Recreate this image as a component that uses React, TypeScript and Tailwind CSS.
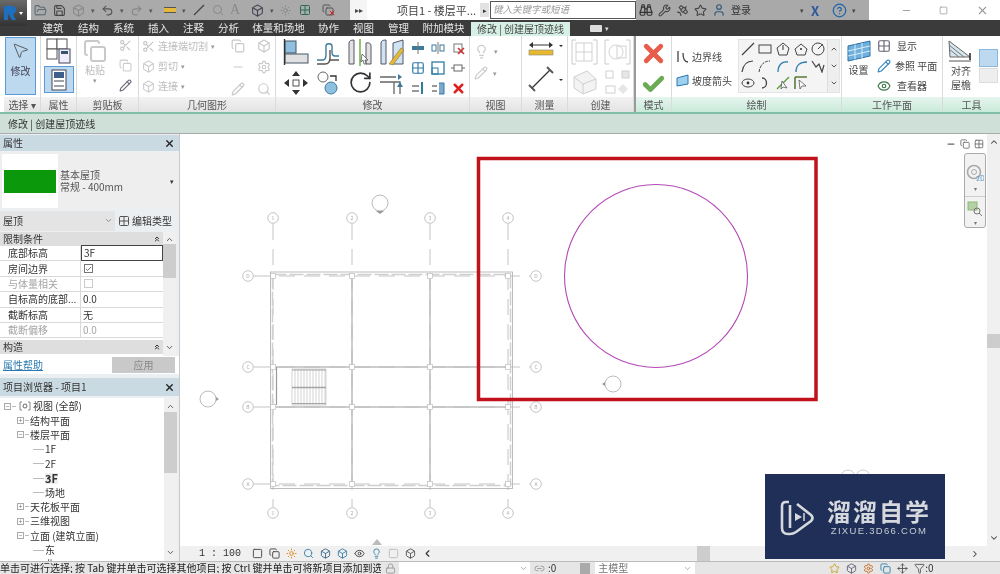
import React from "react";
import { Minus, Square, X, ChevronDown, ChevronUp, ChevronsUp, ChevronLeft, ChevronRight, Check, Scissors, Copy, Lightbulb, Pencil, Search, Wrench, Star, User, CircleHelp, Binoculars, Satellite, Save, FolderOpen, Undo2, Redo2, Lock, Filter, Settings, Grid2x2, Eye, MousePointer2, Move, RotateCw, Box, Sun, Link2 } from "lucide-react";

const font = "font-['Noto_Sans_CJK_SC','Noto_Sans',sans-serif]";

function Ico({ w = 20, h = 20, children }: { w?: number; h?: number; children: React.ReactNode }) {
  return (
    <svg width={w} height={h} viewBox={`0 0 ${w} ${h}`} fill="none" className="shrink-0">
      {children}
    </svg>
  );
}

function Panel({ w, title, green, children }: { w: number; title: string; green?: boolean; children?: React.ReactNode }) {
  return (
    <div className="flex flex-col shrink-0 border-r border-[#d8dcdc]" style={{ width: w }}>
      <div className="h-[61px] overflow-hidden">{children}</div>
      <div className={`h-[15px] flex items-center justify-center text-[10px] leading-none text-[#555] ${green ? "bg-gradient-to-b from-[#e6f5ef] to-[#c9ead9]" : "bg-gradient-to-b from-[#f2f2f2] to-[#e3e3e3]"}`}>
        {title}
      </div>
    </div>
  );
}

function Tab({ w, t }: { w: number; t: string }) {
  return (
    <div className="text-center text-[#e8e8e8] text-[10.5px] leading-none shrink-0" style={{ width: w }}>
      {t}
    </div>
  );
}

function Row({ label, value, dim, active }: { label: string; value: React.ReactNode; dim?: boolean; active?: boolean }) {
  return (
    <div className={`flex h-[15.4px] border-b border-[#d9d9d9] text-[10px] leading-none ${dim ? "text-[#a5a5a5]" : "text-[#333]"}`}>
      <div className="w-[81px] pl-2 flex items-center border-r border-[#d9d9d9] overflow-hidden whitespace-nowrap">{label}</div>
      <div className={`flex-1 pl-[2px] flex items-center ${active ? "border border-[#444] -my-px" : ""}`}>{value}</div>
    </div>
  );
}

function SectionHead({ t }: { t: string }) {
  return (
    <div className="h-[14px] bg-[#dedede] flex items-center justify-between pl-[3px] pr-[2px] text-[10px] leading-none text-[#333]">
      {t}
      <ChevronsUp size={8} strokeWidth={3} />
    </div>
  );
}

function Tree({ t, indent, sign, bold, line, view }: { t: string; indent: number; sign?: string; bold?: boolean; line?: boolean; view?: boolean }) {
  return (
    <div className="h-[14.4px] flex items-center text-[10px] leading-none text-[#333]" style={{ paddingLeft: indent }}>
      {sign && (
        <span className="w-[7px] h-[7px] border border-[#aaa] text-[7px] leading-[5px] text-center text-[#777] mr-[1px]">{sign}</span>
      )}
      {line && <span className="w-[11px] h-px bg-[#bbb] mr-[1px]" />}
      {sign && <span className="w-[4px] h-px bg-[#bbb] mr-[1px]" />}
      {view && (
        <svg width="12" height="10" viewBox="0 0 12 10" fill="none" className="mx-[2px] shrink-0">
          <path d="M3 1H1v8h2M9 1h2v8H9" stroke="#888" />
          <circle cx="6" cy="5" r="2" stroke="#666" />
        </svg>
      )}
      <span className={bold ? "font-bold bg-[#eeeeee] text-[11px]" : ""}>{t}</span>
    </div>
  );
}

function SmallText({ t, dim }: { t: string; dim?: boolean }) {
  return <span className={`text-[10px] leading-none whitespace-nowrap ${dim ? "text-[#bcbcbc]" : "text-[#444]"}`}>{t}</span>;
}

function Bubble({ x, y, n }: { x: number; y: number; n: string }) {
  return (
    <g>
      <circle cx={x} cy={y} r={5.3} fill="#fff" stroke="#b5b5b5" strokeWidth="0.8" />
      <text x={x} y={y + 1.8} textAnchor="middle" fontSize="5" fill="#aaa">{n}</text>
    </g>
  );
}

function Drawing() {
  const vx = [273, 352, 430, 508];
  const hy = [276, 367, 407, 484];
  return (
    <svg viewBox="180 134 807 412" className="w-full h-full block" fill="none">
      {vx.map((x, i) => (
        <g key={x}>
          <line x1={x} y1={224} x2={x} y2={507} stroke="#b5b5b5" strokeWidth="0.8" strokeDasharray="16 9" />
          <Bubble x={x} y={218} n={String(i + 1)} />
          <Bubble x={x} y={513} n={String(i + 1)} />
        </g>
      ))}
      {hy.map((y, i) => (
        <g key={y}>
          <line x1={254} y1={y} x2={530} y2={y} stroke="#b5b5b5" strokeWidth="0.8" strokeDasharray="16 9" />
          <Bubble x={248} y={y} n={"DCBA"[i]} />
          <Bubble x={536} y={y} n={"DCBA"[i]} />
        </g>
      ))}
      <rect x={270.5} y={272} width={242} height={216.5} stroke="#b5b5b5" strokeWidth="0.9" />
      <rect x={272.5} y={274.5} width={238} height={211} stroke="#d0d0d0" strokeWidth="1.5" strokeDasharray="14 3" />
      {[352, 430].map((x) => (
        <line key={x} x1={x} y1={276} x2={x} y2={486} stroke="#bdbdbd" strokeWidth="1.5" />
      ))}
      {[367, 407].map((y) => (
        <line key={y} x1={276} y1={y} x2={510} y2={y} stroke="#bdbdbd" strokeWidth="1.5" />
      ))}
      <line x1={276.5} y1={367} x2={276.5} y2={405} stroke="#999" strokeWidth="1.2" />
      <g stroke="#b5b5b5" strokeWidth="0.6">
        <rect x={292} y={369} width={34} height={36} fill="#fff" />
        {Array.from({ length: 11 }).map((_, i) => (
          <line key={i} x1={295 + i * 3} y1={369} x2={295 + i * 3} y2={405} />
        ))}
      </g>
      <line x1={292} y1={387.5} x2={326} y2={387.5} stroke="#a5a5a5" strokeWidth="1.6" />
      <line x1={292} y1={370} x2={326} y2={370} stroke="#a5a5a5" strokeWidth="1" />
      <line x1={292} y1={403.5} x2={326} y2={403.5} stroke="#a5a5a5" strokeWidth="1" />
      {vx.flatMap((x) =>
        hy.map((y) => <rect key={`${x}-${y}`} x={x - 2.5} y={y - 2.5} width={5} height={5} fill="#fff" stroke="#b5b5b5" strokeWidth="0.6" />)
      )}
      <circle cx={380} cy={203} r={8} fill="#fff" stroke="#aaa" strokeWidth="0.8" />
      <path d="M376 211 L384 211 L380 214Z" fill="#999" />
      <circle cx={208} cy={399} r={8} fill="#fff" stroke="#aaa" strokeWidth="0.8" />
      <path d="M216 397 L216 401 L219 399Z" fill="#999" />
      <circle cx={613} cy={384} r={8} fill="#fff" stroke="#aaa" strokeWidth="0.8" />
      <path d="M605 382 L605 386 L602 384Z" fill="#999" />
      <path d="M372 545 L382 545 L377 539Z" fill="#bbb" />
      <circle cx={848} cy={477} r={7} stroke="#ccc" strokeWidth="1" />
      <circle cx={863} cy={477} r={7} stroke="#ccc" strokeWidth="1" />
      <rect x={478.5} y={158.5} width={337.5} height={241} stroke="#c1121c" strokeWidth="3.5" />
      <circle cx={656} cy={276} r={91.5} stroke="#b24bb4" strokeWidth="1.1" />
    </svg>
  );
}

function TitleBar() {
  const q = "#5a6a72";
  return (
    <div className="flex h-[20px] bg-white">
      <div className="w-[27px] h-[26px] bg-gradient-to-b from-[#6a6a6a] to-[#333] z-10 flex items-center pl-[3px] gap-[2px]">
        <svg width="14" height="16" viewBox="0 0 14 16">
          <path d="M1 15V1h7a4 4 0 0 1 2 8l3 6H9L6 9.5H5V15Z" fill="#1f6fc0" />
        </svg>
        <span className="w-0 h-0 border-x-[2px] border-x-transparent border-t-[3px] border-t-white" />
      </div>
      <div className="w-[4px]" />
      <div className="w-[319px] bg-[#aaaaaa] flex items-center pl-[3px] gap-[6px]">
        <FolderOpen size={13} color={q} />
        <Save size={13} color="#444" />
        <Box size={13} color="#888" />
        <span className="text-[7px] text-[#555]">▾</span>
        <Undo2 size={13} color="#555" />
        <span className="text-[7px] text-[#555]">▾</span>
        <Redo2 size={13} color="#888" />
        <span className="text-[7px] text-[#555]">▾</span>
        <span className="w-[12px] h-[6px] ml-[5px] bg-[#e6b93a] border-y border-[#555]" />
        <span className="text-[7px] text-[#555]">▾</span>
        <Ico w={14} h={14}><path d="M2 12 12 2" stroke="#444" strokeWidth="1.3" /></Ico>
        <Search size={12} color="#888" />
        <span className="text-[14px] leading-none text-[#888] font-['Liberation_Serif',serif]">A</span>
        <Box size={13} color="#445" className="ml-[5px]" />
        <span className="text-[7px] text-[#555]">▾</span>
        <Sun size={11} color="#888" />
        <Grid2x2 size={12} color="#2c6a5a" className="ml-[2px]" />
        <span className="relative ml-[5px]">
          <Copy size={12} color="#555" />
          <X size={8} color="#c22" strokeWidth={3} className="absolute -right-[2px] -bottom-[1px]" />
        </span>
      </div>
      <div className="w-[17px] flex items-center justify-center text-[8px] text-[#444] bg-[#f5f5f5]">▸▸</div>
      <div className="w-[113px] flex items-center justify-end pr-[4px] text-[11px] leading-none text-[#444] whitespace-nowrap">项目1 - 楼层平...</div>
      <div className="w-[9px] my-[3px] bg-[#e2e2e2] flex items-center justify-center text-[7px] text-[#333]">▸</div>
      <div className="w-[146px] ml-px my-px border border-[#555] bg-white flex items-center pl-[2px] text-[9.5px] italic leading-none text-[#999] whitespace-nowrap">键入关键字或短语</div>
      <div className="w-[233px] bg-[#a9a9a9] flex items-center pl-[3px] gap-[5px]">
        <Binoculars size={14} color="#333" />
        <Wrench size={13} color="#444" />
        <Satellite size={13} color="#444" />
        <Star size={13} color="#444" />
        <User size={14} color="#33577a" />
        <span className="text-[10px] leading-none text-[#333] w-[64px]">登录</span>
        <span className="text-[7px] text-[#444]">▾</span>
        <span className="text-[13px] leading-none font-bold text-[#2a5a9c] ml-[2px]">X</span>
        <CircleHelp size={15} color="#2264a8" className="ml-[8px]" />
        <span className="text-[7px] text-[#444]">▾</span>
      </div>
      <div className="flex-1 flex items-center text-[#9a9a9a]">
        <Minus size={11} className="ml-[32px]" />
        <Square size={9} className="ml-[27px]" />
        <X size={13} className="ml-[28px]" />
      </div>
    </div>
  );
}

function Ribbon() {
  return (
    <div className="flex h-[78px] shrink-0 bg-white border-b-2 border-[#7fbfa5]">
      <div className="w-[4px]" />
      <Panel w={37} title="选择 ▾">
        <div className="w-[31px] h-[58px] mt-px ml-px bg-[#bcd9f0] border border-[#5b9bd5] flex flex-col items-center pt-[3px] gap-[6px]">
          <MousePointer2 size={19} color="#555" strokeWidth={1.2} />
          <span className="text-[10px] leading-none text-[#445]">修改</span>
        </div>
      </Panel>
      <Panel w={36} title="属性">
        <div className="flex flex-col items-center">
          <Ico w={26} h={30}>
            <rect x="1" y="3" width="10" height="10" stroke="#555" fill="#fff" />
            <rect x="11" y="3" width="10" height="10" stroke="#555" fill="#fff" />
            <rect x="1" y="13" width="10" height="10" stroke="#555" fill="#fff" />
            <rect x="13" y="13" width="11" height="14" stroke="#445" fill="#eef" />
            <rect x="15" y="15" width="7" height="3" fill="#356" />
          </Ico>
          <div className="w-[30px] h-[27px] bg-[#bcd9f0] border border-[#5b9bd5] flex items-center justify-center">
            <Ico w={16} h={22}>
              <rect x="1" y="1" width="14" height="20" fill="#fff" stroke="#445" />
              <rect x="3" y="3" width="10" height="6" fill="#3c5f8c" />
              <path d="M3 12h10M3 17h10" stroke="#445" />
            </Ico>
          </div>
        </div>
      </Panel>
      <Panel w={62} title="剪贴板">
        <div className="grid grid-cols-[36px_1fr] h-full pt-[3px]">
          <div className="flex flex-col items-center gap-[2px]">
            <Copy size={24} color="#c9c9c9" />
            <SmallText t="粘贴" dim />
            <span className="text-[7px] leading-none text-[#999]">▾</span>
          </div>
          <div className="flex flex-col items-center gap-[7px]">
            <Scissors size={13} color="#c4c4c4" />
            <Copy size={13} color="#ccc" />
            <Pencil size={13} color="#667" />
          </div>
        </div>
      </Panel>
      <Panel w={137} title="几何图形">
        <div className="grid grid-cols-[84px_1fr] h-full pt-[3px] pl-[3px]">
          <div className="flex flex-col gap-[6px]">
            <div className="flex items-center gap-[3px] h-[14px]"><Scissors size={13} color="#c4c4c4" /><SmallText t="连接端切割" dim /><span className="text-[7px] text-[#999]">▾</span></div>
            <div className="flex items-center gap-[3px] h-[14px]"><Box size={13} color="#ccc" /><SmallText t="剪切" dim /><span className="text-[7px] text-[#999]">▾</span></div>
            <div className="flex items-center gap-[3px] h-[14px]"><Box size={13} color="#ccc" /><SmallText t="连接" dim /><span className="text-[7px] text-[#999]">▾</span></div>
          </div>
          <div className="grid grid-cols-2 gap-y-[6px] gap-x-[3px] justify-items-center">
            <Copy size={14} color="#c8c8c8" />
            <Box size={14} color="#c8c8c8" />
            <Minus size={14} color="#c8c8c8" />
            <Settings size={14} color="#c8c8c8" />
            <Pencil size={14} color="#c8c8c8" />
            <Search size={14} color="#c8c8c8" />
          </div>
        </div>
      </Panel>
      <Panel w={194} title="修改">
        <div className="flex h-full pt-[2px] pl-[4px]">
          <div className="grid grid-cols-4 w-[128px] gap-y-[3px] justify-items-center">
            <Ico w={26} h={28}>
              <rect x="2" y="3" width="11" height="12" fill="#8fc0e0" stroke="#456" />
              <rect x="2" y="16" width="23" height="9" fill="#e0e0e0" stroke="#456" />
              <path d="M1.5 1v26" stroke="#333" strokeWidth="1.4" />
            </Ico>
            <Ico w={26} h={28}>
              <path d="M2 22h6c3 0 3-3 3-6V8c0-3 6-3 6 0v6c0 3 1 4 3 4h4" stroke="#3f7a9a" strokeWidth="1.4" />
              <path d="M2 26h8c3 0 5-2 5-6v-8M14 22h10" stroke="#555" strokeWidth="1.4" />
            </Ico>
            <Ico w={26} h={28}>
              <path d="M2 26V5q0-3 5-3v24ZM19 26V5q5-1 5 3v18Z" fill="#e2e2e2" stroke="#556" />
              <path d="M13 1v27" stroke="#6ab04a" strokeWidth="1.5" />
              <path d="M15 16l6 6-3 0 1 4-2 0-1-4-2 2Z" fill="#fff" stroke="#444" strokeWidth=".7" />
            </Ico>
            <Ico w={26} h={28}>
              <path d="M2 26V5q0-3 5-3v24ZM14 26V5l10-3v24Z" fill="#cfe3f2" stroke="#556" />
              <path d="M10 26 22 10l3 2-11 15Z" fill="#e8b830" stroke="#775" strokeWidth=".6" />
            </Ico>
            <Ico w={26} h={26}>
              <path d="M13 1 17 6H9ZM13 25l-4-5h8ZM1 13l5-4v8ZM25 13l-5 4V9Z" fill="#333" />
              <rect x="10" y="10" width="6" height="6" fill="#fff" stroke="#555" />
            </Ico>
            <Ico w={26} h={26}>
              <circle cx="8" cy="7" r="5" fill="#fff" stroke="#666" />
              <circle cx="16" cy="18" r="6" fill="#8fc0e0" stroke="#3f7a9a" />
              <path d="M15 6h6v5" stroke="#333" strokeWidth="1.3" />
            </Ico>
            <RotateCw size={25} color="#333" strokeWidth={1.6} />
            <Ico w={26} h={26}>
              <path d="M1 7h16M1 12h12l8 0v12M15 12v12" stroke="#666" strokeWidth="1.3" />
              <path d="M19 4l4 3-4 3ZM21 12l3 5h-6Z" fill="#3f7a9a" />
            </Ico>
          </div>
          <div className="grid grid-cols-3 w-[60px] gap-y-[5px] justify-items-center pt-[3px]">
            <Ico w={14} h={14}><path d="M1 7h12" stroke="#3f7a9a" strokeWidth="4" /><path d="M7 1v12" stroke="#777" /></Ico>
            <Ico w={14} h={14}><rect x="1" y="4" width="4" height="6" stroke="#3f7a9a" /><rect x="9" y="4" width="4" height="6" stroke="#3f7a9a" /><path d="M7 1v12" stroke="#777" /></Ico>
            <Ico w={14} h={14}><rect x="3" y="3" width="8" height="8" stroke="#777" /><path d="M7 7l6 6m0-6-6 6" stroke="#c33" strokeWidth="1.6" /></Ico>
            <Grid2x2 size={14} color="#2e7aa8" />
            <Ico w={14} h={14}><rect x="1" y="1" width="12" height="12" stroke="#2e7aa8" strokeWidth="1.3" /><rect x="1" y="7" width="6" height="6" stroke="#2e7aa8" /></Ico>
            <Ico w={14} h={14}><rect x="3" y="4" width="8" height="6" stroke="#666" /><path d="M0 7h3m8 0h3" stroke="#666" /></Ico>
            <Ico w={14} h={14}><path d="M1 5h7M1 10h7" stroke="#333" /><path d="M11 1v12" stroke="#2e7aa8" strokeWidth="2" /></Ico>
            <Ico w={14} h={14}><path d="M1 5h5M1 10h5" stroke="#333" /><path d="M8 2h5v11H8" fill="#7fa8c8" stroke="#2e7aa8" /></Ico>
            <X size={15} color="#d22" strokeWidth={4} />
          </div>
        </div>
      </Panel>
      <Panel w={52} title="视图">
        <div className="flex flex-col gap-[7px] pt-[8px] pl-[4px]">
          <span className="flex items-center gap-[5px]"><Lightbulb size={15} color="#ccc" /><span className="text-[7px] text-[#999]">▾</span></span>
          <span className="flex items-center gap-[5px]"><Pencil size={14} color="#ccc" /><span className="text-[7px] text-[#999]">▾</span></span>
        </div>
      </Panel>
      <Panel w={46} title="测量">
        <div className="flex flex-col gap-[8px] pt-[5px] pl-[6px]">
          <Ico w={36} h={17}>
            <path d="M2 4h22" stroke="#333" /><path d="M1 4l4-3v6ZM25 4l-4-3v6Z" fill="#333" />
            <rect x="1" y="9" width="24" height="5" fill="#e8b830" stroke="#887" strokeWidth=".6" />
            <path d="M31 4h4l-2 2Z" fill="#333" />
          </Ico>
          <Ico w={36} h={26}>
            <path d="M4 22 22 4" stroke="#333" strokeWidth="1.2" />
            <path d="M1 19l6 6M19 1l6 6" stroke="#555" strokeWidth="1.8" />
            <path d="M31 13h4l-2 2Z" fill="#333" />
          </Ico>
        </div>
      </Panel>
      <Panel w={66} title="创建">
        <div className="grid grid-cols-2 gap-[4px] pt-[3px] pl-[3px]">
          <Ico w={27} h={26}><path d="M5 1H1v24h4M22 1h4v24h-4" stroke="#ccc" /><rect x="5" y="4" width="16" height="18" stroke="#d2d2d2" /><path d="M13 4v18M5 13h16" stroke="#d2d2d2" /></Ico>
          <Ico w={27} h={26}><path d="M5 1H1v24h4M22 1h4v24h-4" stroke="#ccc" /><circle cx="12" cy="13" r="7" stroke="#d2d2d2" /><rect x="13" y="7" width="9" height="12" stroke="#d2d2d2" /></Ico>
          <Ico w={27} h={26}><path d="M3 8 16 2l9 8v10l-13 5-9-6Z" fill="#f3f3f3" stroke="#cfcfcf" /><path d="M3 8l9 7v10M12 15l13-5" stroke="#cfcfcf" /></Ico>
          <Ico w={27} h={26}><rect x="2" y="2" width="7" height="7" stroke="#d0d0d0" /><rect x="18" y="2" width="7" height="7" fill="#e6e6e6" stroke="#d0d0d0" /><rect x="2" y="17" width="9" height="7" stroke="#d0d0d0" /><path d="M19 15l5 5-5 5-5-5Z" fill="#e6e6e6" /></Ico>
        </div>
      </Panel>
      <div className="w-[2px] bg-[#9a9a9a]" />
      <Panel w={36} title="模式" green>
        <div className="flex flex-col items-center pt-[3px] gap-[4px]">
          <X size={29} color="#e85c4a" strokeWidth={4} />
          <Check size={25} color="#6cab54" strokeWidth={4.5} />
        </div>
      </Panel>
      <Panel w={170} title="绘制" green>
        <div className="flex h-full">
          <div className="w-[64px] shrink-0 flex flex-col pl-[4px] pt-[13px] gap-[10px]">
            <div className="flex items-center gap-[2px]">
              <Ico w={14} h={15}><path d="M2 13V2M12 13c-4 0-5-3-5-9" stroke="#444" strokeWidth="1.3" /></Ico>
              <SmallText t="边界线" />
            </div>
            <div className="flex items-center gap-[2px]">
              <Ico w={14} h={13}><path d="M1 4l11-3v9L1 12Z" fill="#9fd0ee" stroke="#2a78b0" /></Ico>
              <SmallText t="坡度箭头" />
            </div>
          </div>
          <div className="w-[102px] h-[54px] mt-[3px] ml-[2px] bg-[#f4f4f4] border border-[#e4e4e4] flex">
            <div className="grid grid-cols-5 flex-1 justify-items-center items-center py-[1px]">
              <Ico w={14} h={14}><path d="M1 13 13 1" stroke="#444" strokeWidth="1.2" /></Ico>
              <Ico w={14} h={14}><rect x="1" y="3" width="12" height="8" stroke="#444" /></Ico>
              <Ico w={14} h={14}><path d="M7 1l6 5-2 7H3L1 6Z" stroke="#444" /><path d="M7 8V3" stroke="#333" /></Ico>
              <Ico w={14} h={14}><path d="M7 2l6 5-2 6H3L1 7Z" stroke="#444" /><circle cx="7" cy="7" r="1" fill="#333" /></Ico>
              <Ico w={14} h={14}><circle cx="7" cy="7" r="6" stroke="#444" /><path d="M7 7l5-5" stroke="#444" /></Ico>
              <Ico w={14} h={14}><path d="M1 13C2 6 6 2 12 2" stroke="#444" strokeWidth="1.2" /></Ico>
              <Ico w={14} h={14}><path d="M1 13C2 6 6 2 12 2" stroke="#444" strokeDasharray="3 1" /></Ico>
              <Ico w={14} h={14}><path d="M2 13C2 6 6 2 12 3" stroke="#2a7ab0" strokeWidth="1.3" /></Ico>
              <Ico w={14} h={14}><path d="M2 13C2 6 6 3 13 3" stroke="#2a7ab0" strokeWidth="1.3" /></Ico>
              <Ico w={14} h={14}><path d="M1 2l4 6 3-3 3 8 2-7" stroke="#444" strokeWidth="1.2" /></Ico>
              <Ico w={14} h={14}><ellipse cx="7" cy="7" rx="6" ry="4" stroke="#444" /><circle cx="7" cy="7" r="1.4" fill="#333" /></Ico>
              <Ico w={14} h={14}><path d="M4 2c6 0 6 10 0 10" stroke="#444" strokeWidth="1.3" /></Ico>
              <Ico w={14} h={14}><path d="M1 13 13 1" stroke="#5aa040" strokeWidth="1.4" /><path d="M6 5l5 7-4-1-2 2Z" fill="#fff" stroke="#444" strokeWidth=".7" /></Ico>
              <Ico w={14} h={14}><path d="M1 1h12M1 1v12" stroke="#5a7a3a" strokeWidth="1.6" /><path d="M5 4l7 6-4 0-2 3Z" fill="#fff" stroke="#444" strokeWidth=".7" /></Ico>
            </div>
            <div className="w-[12px] bg-[#eeeeee] border-l border-[#ddd] flex flex-col items-center justify-around text-[#555]">
              <ChevronUp size={8} strokeWidth={3} />
              <ChevronDown size={8} strokeWidth={3} />
              <ChevronDown size={8} strokeWidth={3} />
            </div>
          </div>
        </div>
      </Panel>
      <Panel w={101} title="工作平面" green>
        <div className="flex h-full">
          <div className="w-[33px] flex flex-col items-center pt-[4px] gap-[3px]">
            <Ico w={24} h={22}>
              <path d="M1 6l22-5v15L1 21Z" fill="#6fb0dc" stroke="#2a70a8" />
              <path d="M8 4.500v15M15 3v15M1 11l22-5M1 16l22-5" stroke="#d8edf8" />
            </Ico>
            <SmallText t="设置" />
          </div>
          <div className="flex flex-col pl-[2px] pt-[2px] gap-[5px]">
            <span className="flex items-center gap-[6px] h-[15px]"><Grid2x2 size={14} color="#667" /><SmallText t="显示" /></span>
            <span className="flex items-center gap-[4px] h-[15px]"><Pencil size={14} color="#3c8ac0" /><SmallText t="参照 平面" /></span>
            <span className="flex items-center gap-[6px] h-[15px]"><Eye size={14} color="#3a7a4a" /><SmallText t="查看器" /></span>
          </div>
        </div>
      </Panel>
      <div className="flex-1 flex flex-col">
        <div className="h-[61px] flex">
          <div className="w-[36px] flex flex-col items-center pt-[3px] gap-[1px]">
            <Ico w={26} h={24}>
              <path d="M1 2 22 18H2Z" fill="#d6e6ee" stroke="#666" />
              <path d="M1 6l15 12M1 10l10 8" stroke="#777" />
              <path d="M22 14v7" stroke="#222" strokeWidth="1.5" />
              <path d="M1 22h22" stroke="#555" />
            </Ico>
            <span className="text-[10px] leading-[14px] text-center text-[#444] w-[24px]">对齐屋檐</span>
          </div>
          <div className="flex flex-col pt-[13px] gap-[1px]">
            <div className="w-[19px] h-[18px] bg-[#bcd9f0] border border-[#8ab8dc]" />
            <div className="w-[19px] h-[15px] bg-[#eeeeee] border border-[#ddd]" />
          </div>
        </div>
        <div className="h-[15px] flex items-center justify-center text-[10px] leading-none text-[#555] bg-gradient-to-b from-[#e6f5ef] to-[#c9ead9]">工具</div>
      </div>
    </div>
  );
}

function Sidebar() {
  return (
    <div className="w-[180px] shrink-0 flex flex-col bg-[#eceff1] border-r border-[#c9c9c9] overflow-hidden">
      <div className="h-[16px] bg-[#c9dae2] flex items-center justify-between pl-[3px] pr-[4px] text-[10px] leading-none text-[#333] mt-px shrink-0">
        属性 <X size={11} strokeWidth={3} color="#222" />
      </div>
      <div className="h-[56px] mt-[2px] mx-px bg-[#eeeeee] flex items-center shrink-0">
        <div className="w-[56px] h-[54px] bg-white flex items-center justify-center ml-px">
          <div className="w-[52px] h-[23px] bg-[#0b980b]" />
        </div>
        <div className="flex-1 pl-[2px] text-[10px] leading-[12.500px] text-[#555]">
          <div>基本屋顶</div>
          <div>常规 - 400mm</div>
        </div>
        <span className="text-[7px] text-[#333] pr-[4px]">▾</span>
      </div>
      <div className="h-[21px] flex items-center mt-[1px] shrink-0">
        <div className="w-[115px] h-[20px] bg-[#e4e4e4] flex items-center justify-between pl-[3px] pr-[2px] text-[10px] leading-none text-[#333]">
          屋顶 <ChevronDown size={9} color="#777" />
        </div>
        <Grid2x2 size={12} color="#555" className="ml-[3px]" />
        <span className="ml-[2px] text-[10px] leading-none text-[#333] whitespace-nowrap">编辑类型</span>
      </div>
      <div className="flex h-[124px] mt-px mr-[3px] bg-white shrink-0">
        <div className="w-[163px] flex flex-col">
          <SectionHead t="限制条件" />
          <Row label="底部标高" value="3F" active />
          <Row label="房间边界" value={<span className="w-[9px] h-[9px] border border-[#777] flex items-center justify-center ml-[1px]"><Check size={8} color="#333" strokeWidth={2.5} /></span>} />
          <Row label="与体量相关" dim value={<span className="w-[9px] h-[9px] border border-[#ccc] ml-[1px]" />} />
          <Row label="自标高的底部..." value="0.0" />
          <Row label="截断标高" value="无" />
          <Row label="截断偏移" dim value="0.0" />
          <div className="mt-[2px]">
            <SectionHead t="构造" />
          </div>
        </div>
        <div className="flex-1 bg-[#f0f0f0] flex flex-col items-center">
          <ChevronUp size={9} strokeWidth={2.5} color="#555" className="mt-[3px]" />
          <div className="w-full h-[34px] bg-[#cdcdcd]" />
          <ChevronDown size={9} strokeWidth={2.5} color="#555" className="mt-auto mb-[4px]" />
        </div>
      </div>
      <div className="h-[18px] flex items-center justify-between pl-[3px] pr-[4px] bg-white shrink-0">
        <span className="text-[10px] leading-none text-[#2a7ab0] underline">属性帮助</span>
        <span className="w-[63px] h-[16px] bg-[#c9c9c9] flex items-center justify-center text-[10px] leading-none text-[#888]">应用</span>
      </div>
      <div className="h-[4px] shrink-0" />
      <div className="h-[18px] bg-[#c9dae2] flex items-center justify-between pl-[3px] pr-[4px] text-[10px] leading-none text-[#333] shrink-0">
        项目浏览器 - 项目1 <X size={11} strokeWidth={3} color="#222" />
      </div>
      <div className="flex-1 min-h-0 mt-[2px] mr-[2px] flex bg-white overflow-hidden">
        <div className="flex-1 pt-px overflow-hidden">
          <Tree t="视图 (全部)" indent={4} sign="−" view />
          <Tree t="结构平面" indent={17} sign="+" />
          <Tree t="楼层平面" indent={17} sign="−" />
          <Tree t="1F" indent={33} line />
          <Tree t="2F" indent={33} line />
          <Tree t="3F" indent={33} line bold />
          <Tree t="场地" indent={33} line />
          <Tree t="天花板平面" indent={17} sign="+" />
          <Tree t="三维视图" indent={17} sign="+" />
          <Tree t="立面 (建筑立面)" indent={17} sign="−" />
          <Tree t="东" indent={33} line />
          <Tree t="北" indent={33} line />
        </div>
        <div className="w-[13px] bg-[#f0f0f0] flex flex-col items-center">
          <ChevronUp size={9} strokeWidth={2.5} color="#555" className="mt-[4px]" />
          <div className="w-full h-[61px] bg-[#cdcdcd] mt-px" />
          <ChevronDown size={9} strokeWidth={2.5} color="#555" className="mt-auto mb-[4px]" />
        </div>
      </div>
    </div>
  );
}

function ViewBar() {
  return (
    <div className="h-[15px] shrink-0 bg-[#f0f0f0] flex items-center text-[#555]">
      <span className="w-[62px] pl-[19px] text-[10px] leading-none whitespace-nowrap font-['Liberation_Mono',monospace] text-[#333]">1 : 100</span>
      <div className="flex items-center gap-[6px] ml-[10px]">
        <Square size={11} color="#444" />
        <Copy size={11} color="#444" />
        <Sun size={11} color="#d88a20" />
        <Search size={11} color="#3a80a8" />
        <Box size={11} color="#3a6a8a" />
        <Box size={11} color="#3a80a8" />
        <Eye size={11} color="#444" />
        <Lightbulb size={11} color="#3a80a8" />
        <Square size={11} color="#bbb" />
        <Box size={11} color="#555" />
        <ChevronLeft size={11} color="#333" strokeWidth={2.5} />
      </div>
      <div className="w-[13px] h-[15px] bg-[#cdcdcd] ml-[264px]" />
      <ChevronRight size={10} color="#444" strokeWidth={2.5} className="ml-[260px]" />
    </div>
  );
}

function StatusBar() {
  return (
    <div className="h-[13px] shrink-0 bg-[#e6e6e6] border-t border-[#bbb] flex items-center overflow-hidden">
      <div className="w-[381px] shrink-0 overflow-hidden text-[10px] leading-none text-[#222] whitespace-nowrap">
        单击可进行选择; 按 Tab 键并单击可选择其他项目; 按 Ctrl 键并单击可将新项目添加到选择集
      </div>
      <Lock size={11} color="#999" className="ml-[4px]" />
      <div className="w-[131px] h-full ml-[3px] bg-white flex items-center justify-end pr-[2px]">
        <ChevronDown size={9} color="#999" />
      </div>
      <Link2 size={11} color="#999" className="ml-[4px]" />
      <span className="text-[10px] leading-none text-[#333] ml-[3px]">:0</span>
      <div className="w-[10px] h-[11px] bg-[#aaa] ml-[24px]" />
      <div className="w-[100px] h-full ml-[5px] bg-white flex items-center justify-between px-[3px] text-[10px] leading-none text-[#777]">
        主模型 <ChevronDown size={9} color="#999" />
      </div>
      <div className="flex items-center gap-[6px] ml-[134px]">
        <Star size={11} color="#c8a020" />
        <Box size={11} color="#667" />
        <Settings size={11} color="#c86a20" />
        <Copy size={11} color="#3a80a8" />
        <Move size={11} color="#555" />
        <Filter size={11} color="#555" />
      </div>
      <span className="text-[10px] leading-none text-[#333]">:0</span>
    </div>
  );
}

export default function App() {
  return (
    <div className={`w-[1000px] h-[574px] overflow-hidden bg-white flex flex-col blur-[0.35px] ${font}`}>
      <TitleBar />
      <div className="h-[16px] shrink-0 bg-[#3b3b3b] flex items-center">
        <div className="w-[35px]" />
        <Tab w={36} t="建筑" />
        <Tab w={35} t="结构" />
        <Tab w={35} t="系统" />
        <Tab w={35} t="插入" />
        <Tab w={35} t="注释" />
        <Tab w={35} t="分析" />
        <Tab w={65} t="体量和场地" />
        <Tab w={35} t="协作" />
        <Tab w={35} t="视图" />
        <Tab w={35} t="管理" />
        <Tab w={55} t="附加模块" />
        <div className="w-[99px] h-[14px] mt-[2px] bg-[#d6f0e5] flex items-center justify-center text-[10px] leading-none text-[#444] whitespace-nowrap">修改 | 创建屋顶迹线</div>
        <div className="ml-[20px] w-[12px] h-[7px] bg-[#ddd] rounded-[1px]" />
        <span className="ml-[3px] text-[7px] text-[#ddd]">▾</span>
      </div>
      <Ribbon />
      <div className="h-[20px] bg-[#cfe0d9] flex items-center pl-[8px] text-[10px] leading-none text-[#333] border-b border-[#aaa] shrink-0">
        修改 | 创建屋顶迹线
      </div>
      <div className="flex flex-1 min-h-0">
        <Sidebar />
        <div className="flex-1 flex flex-col min-w-0">
          <div className="flex flex-1 min-h-0 relative">
            <div className="flex-1 min-w-0 bg-white">
              <Drawing />
            </div>
            <div className="w-[13px] bg-[#f0f0f0] flex flex-col items-center">
              <ChevronUp size={10} strokeWidth={2.5} color="#444" className="mt-[3px]" />
              <div className="w-full h-[14px] bg-[#cdcdcd] mt-[187px]" />
              <ChevronDown size={10} strokeWidth={2.5} color="#444" className="mt-auto mb-[3px]" />
            </div>
            <div className="absolute right-[16px] top-[5px] flex items-center gap-[4px]">
              <Minus size={10} strokeWidth={3} color="#666" />
              <Copy size={10} color="#666" strokeWidth={2} />
              <Grid2x2 size={10} color="#666" />
            </div>
            <div className="absolute right-[14px] top-[19px] w-[22px] h-[75px] bg-[#f2f2f2] border border-[#aaa] rounded-[3px] flex flex-col items-center pt-[10px] gap-[4px]">
              <svg width="18" height="18" viewBox="0 0 18 18" fill="none">
                <circle cx="8" cy="8" r="6.5" stroke="#aaa" strokeWidth="1.6" />
                <circle cx="8" cy="8" r="2.5" stroke="#aaa" />
                <text x="10" y="17" fontSize="7" fill="#5a9ac8">2D</text>
              </svg>
              <span className="text-[6px] leading-none text-[#777]">▾</span>
              <div className="w-full h-px bg-[#ccc]" />
              <svg width="16" height="15" viewBox="0 0 16 15" fill="none">
                <rect x="1" y="1" width="9" height="8" fill="#b5d0a5" stroke="#8ab87a" />
                <circle cx="10" cy="10" r="3" stroke="#777" />
                <path d="M12 12l3 3" stroke="#777" />
              </svg>
              <span className="text-[6px] leading-none text-[#777]">▾</span>
            </div>
            <div className="absolute left-[585px] top-[340px] w-[180px] h-[85px] bg-[#1f2f57] flex items-center pl-[15px] gap-[11px] z-10">
              <svg width="36" height="40" viewBox="0 0 36 40" fill="none">
                <path d="M9 5H6q-4 0-4 4v22q0 6 6 6h2q3 0 6-2l15-11q3-3 0-6L17 7" stroke="#d5d8dd" strokeWidth="2.6" />
                <path d="M10 31V8" stroke="#d5d8dd" strokeWidth="2.6" />
                <path d="M15 16l7 4-7 4Z" fill="#d5d8dd" />
                <path d="M24 16v8" stroke="#d5d8dd" strokeWidth="1.5" />
              </svg>
              <div className="flex flex-col items-center">
                <span className="text-[24px] leading-[28px] font-bold text-[#d5d8dd] tracking-[2px] whitespace-nowrap">溜溜自学</span>
                <span className="text-[9.5px] leading-[12px] text-[#c6cad2] tracking-[1.3px] font-['Liberation_Sans',sans-serif] whitespace-nowrap">ZIXUE.3D66.COM</span>
              </div>
            </div>
          </div>
          <ViewBar />
        </div>
      </div>
      <StatusBar />
    </div>
  );
}
